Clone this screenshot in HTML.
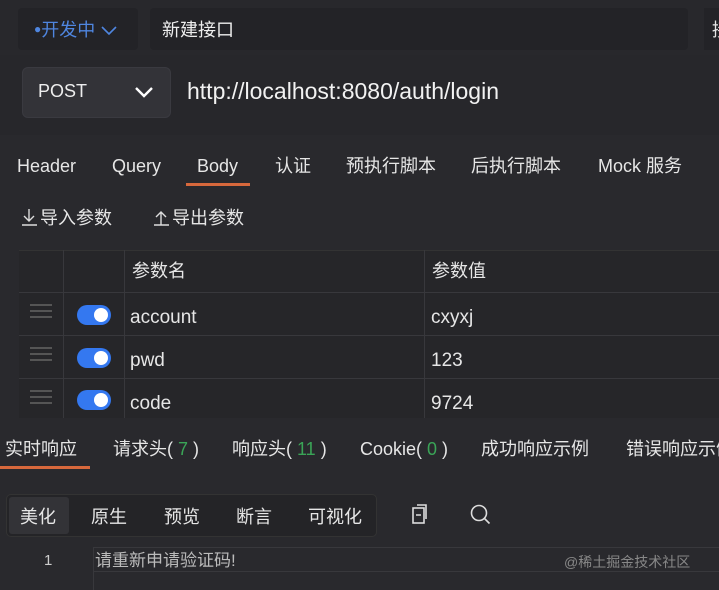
<!DOCTYPE html>
<html><head><meta charset="utf-8"><style>
*{margin:0;padding:0;box-sizing:border-box}
body{width:719px;height:590px;overflow:hidden;background:#29292d;font-family:"Liberation Sans","Noto Sans CJK SC",sans-serif;color:#e6e6e6;position:relative;line-height:1.2}
.a{position:absolute;white-space:nowrap}
.t{font-size:18px}
</style></head><body>
<div class="a" style="left:0;top:0;width:719px;height:55px;background:#28282c"></div>
<div class="a" style="left:18px;top:8px;width:120px;height:42px;background:#232327;border-radius:4px"></div>
<div class="a" style="left:34px;top:20px;font-size:18px;color:#4f86e0"><span style="font-size:12px;vertical-align:3px">●</span>开发中 <svg width="18" height="12" viewBox="0 0 18 12"><path d="M2 3l7 7 7-7" fill="none" stroke="#4f86e0" stroke-width="1.6"/></svg></div>
<div class="a" style="left:150px;top:8px;width:538px;height:42px;background:#232327;border-radius:4px"></div>
<div class="a" style="left:162px;top:20px;font-size:18px;color:#eee">新建接口</div>
<div class="a" style="left:704px;top:8px;width:20px;height:42px;background:#232327"></div>
<div class="a" style="left:712px;top:20px;font-size:18px">接</div>
<div class="a" style="left:0;top:55px;width:719px;height:80px;background:#27272b"></div>
<div class="a" style="left:22px;top:67px;width:149px;height:51px;background:#333338;border-radius:6px;border:1px solid #3a3a40"></div>
<div class="a" style="left:38px;top:81px;font-size:18px;color:#eee">POST</div>
<svg class="a" style="left:133px;top:84px" width="22" height="16" viewBox="0 0 22 16"><path d="M3 4l8 8 8-8" fill="none" stroke="#fff" stroke-width="2.4"/></svg>
<div class="a" style="left:187px;top:78px;font-size:23px;color:#f2f2f2">http://localhost:8080/auth/login</div>
<div class="a t" style="left:17px;top:156px">Header</div>
<div class="a t" style="left:112px;top:156px">Query</div>
<div class="a t" style="left:197px;top:156px">Body</div>
<div class="a" style="left:186px;top:183px;width:64px;height:3px;background:#d7683c"></div>
<div class="a t" style="left:275px;top:156px">认证</div>
<div class="a t" style="left:346px;top:156px">预执行脚本</div>
<div class="a t" style="left:471px;top:156px">后执行脚本</div>
<div class="a t" style="left:598px;top:156px">Mock 服务</div>
<div class="a t" style="left:20px;top:207px"><svg width="20" height="20" viewBox="0 0 20 20" style="vertical-align:-3px"><path d="M9 2v12M4 9l5 5 5-5M2 18h15" fill="none" stroke="#ddd" stroke-width="1.4"/></svg>导入参数</div>
<div class="a t" style="left:152px;top:207px"><svg width="20" height="20" viewBox="0 0 20 20" style="vertical-align:-3px"><path d="M9 18V6M4 10l5-5 5 5M2 18h15" fill="none" stroke="#ddd" stroke-width="1.4"/></svg>导出参数</div>
<div class="a" style="left:19px;top:250px;width:700px;height:168px;background:#262629;border-top:1px solid #333"></div>
<div class="a" style="left:19px;top:292px;width:700px;height:1px;background:#38383c"></div>
<div class="a" style="left:19px;top:335px;width:700px;height:1px;background:#38383c"></div>
<div class="a" style="left:19px;top:378px;width:700px;height:1px;background:#38383c"></div>
<div class="a" style="left:63px;top:250px;width:1px;height:168px;background:#38383c"></div>
<div class="a" style="left:124px;top:250px;width:1px;height:168px;background:#38383c"></div>
<div class="a" style="left:424px;top:250px;width:1px;height:168px;background:#38383c"></div>
<div class="a t" style="left:132px;top:261px">参数名</div>
<div class="a t" style="left:432px;top:261px">参数值</div>
<div class="a" style="left:30px;top:304px;width:22px;height:14px;border-top:2px solid #555;border-bottom:2px solid #555"><div style="margin-top:4px;height:2px;background:#555"></div></div>
<div class="a" style="left:30px;top:347px;width:22px;height:14px;border-top:2px solid #555;border-bottom:2px solid #555"><div style="margin-top:4px;height:2px;background:#555"></div></div>
<div class="a" style="left:30px;top:390px;width:22px;height:14px;border-top:2px solid #555;border-bottom:2px solid #555"><div style="margin-top:4px;height:2px;background:#555"></div></div>
<div class="a" style="left:77px;top:305px;width:34px;height:20px;background:#3478f0;border-radius:10px"><div style="position:absolute;right:3px;top:3px;width:14px;height:14px;border-radius:7px;background:#fff"></div></div>
<div class="a" style="left:77px;top:348px;width:34px;height:20px;background:#3478f0;border-radius:10px"><div style="position:absolute;right:3px;top:3px;width:14px;height:14px;border-radius:7px;background:#fff"></div></div>
<div class="a" style="left:77px;top:390px;width:34px;height:20px;background:#3478f0;border-radius:10px"><div style="position:absolute;right:3px;top:3px;width:14px;height:14px;border-radius:7px;background:#fff"></div></div>
<div class="a" style="left:130px;top:307px;font-size:19px">account</div>
<div class="a" style="left:130px;top:350px;font-size:19px">pwd</div>
<div class="a" style="left:130px;top:393px;font-size:19px">code</div>
<div class="a" style="left:431px;top:307px;font-size:19px">cxyxj</div>
<div class="a" style="left:431px;top:350px;font-size:19px">123</div>
<div class="a" style="left:431px;top:393px;font-size:19px">9724</div>
<div class="a" style="left:0;top:418px;width:719px;height:172px;background:#29292d"></div>
<div class="a t" style="left:5px;top:439px">实时响应</div>
<div class="a" style="left:0;top:466px;width:90px;height:3px;background:#d7683c"></div>
<div class="a t" style="left:113px;top:439px">请求头(<span style="color:#3aa457"> 7 </span>)</div>
<div class="a t" style="left:232px;top:439px">响应头(<span style="color:#3aa457"> 11 </span>)</div>
<div class="a t" style="left:360px;top:439px">Cookie(<span style="color:#3aa457"> 0 </span>)</div>
<div class="a t" style="left:481px;top:439px">成功响应示例</div>
<div class="a t" style="left:626px;top:439px">错误响应示例</div>
<div class="a" style="left:6px;top:494px;width:371px;height:43px;background:#242427;border:1px solid #333;border-radius:5px"></div>
<div class="a" style="left:9px;top:497px;width:60px;height:37px;background:#333337;border-radius:3px"></div>
<div class="a t" style="left:20px;top:507px">美化</div>
<div class="a t" style="left:91px;top:507px">原生</div>
<div class="a t" style="left:164px;top:507px">预览</div>
<div class="a t" style="left:236px;top:507px">断言</div>
<div class="a t" style="left:308px;top:507px">可视化</div>
<svg class="a" style="left:409px;top:503px" width="22" height="24" viewBox="0 0 22 24"><rect x="4" y="5" width="11" height="15" fill="none" stroke="#ddd" stroke-width="1.6"/><path d="M8 2h9v14M7 12h5" fill="none" stroke="#ddd" stroke-width="1.6"/></svg>
<svg class="a" style="left:469px;top:503px" width="24" height="24" viewBox="0 0 24 24"><circle cx="10" cy="10" r="7.5" fill="none" stroke="#ddd" stroke-width="1.6"/><path d="M15.5 15.5l5 5" stroke="#ddd" stroke-width="1.6"/></svg>
<div class="a" style="left:93px;top:547px;width:626px;height:1px;background:#38383c"></div>
<div class="a" style="left:93px;top:571px;width:626px;height:1px;background:#38383c"></div>
<div class="a" style="left:93px;top:547px;width:1px;height:43px;background:#38383c"></div>
<div class="a" style="left:44px;top:552px;font-size:15px;color:#ccc">1</div>
<div class="a" style="left:95px;top:551px;font-size:17px;color:#bbb">请重新申请验证码!</div>
<div class="a" style="left:564px;top:554px;font-size:14px;color:#888">@稀土掘金技术社区</div>
</body></html>
